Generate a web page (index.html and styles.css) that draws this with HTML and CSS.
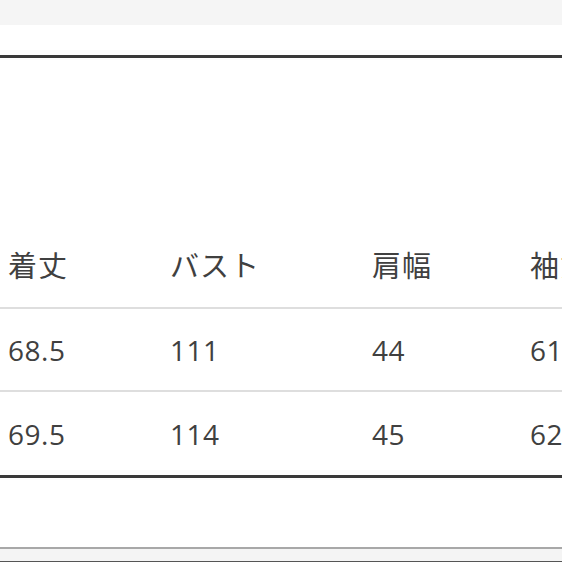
FILE: index.html
```html
<!DOCTYPE html>
<html lang="ja">
<head>
<meta charset="utf-8">
<link rel="stylesheet" href="styles.css">
</head>
<body>
<div class="page">
  <div class="topband"></div>
  <div class="gap"></div>
  <div class="sizetable">
    <div class="row head">
      <div class="cell">着丈</div>
      <div class="cell">バスト</div>
      <div class="cell">肩幅</div>
      <div class="cell">袖丈</div>
    </div>
    <div class="row data">
      <div class="cell">68.5</div>
      <div class="cell">111</div>
      <div class="cell">44</div>
      <div class="cell">61.5</div>
    </div>
    <div class="row data last">
      <div class="cell">69.5</div>
      <div class="cell">114</div>
      <div class="cell">45</div>
      <div class="cell">62.5</div>
    </div>
  </div>
  <div class="after"></div>
  <div class="footband"></div>
</div>
</body>
</html>
```
FILE: styles.css
```css
html, body {
  margin: 0;
  padding: 0;
  background: #ffffff;
}
.page {
  width: 562px;
  height: 562px;
  overflow: hidden;
  display: flex;
  flex-direction: column;
  font-family: "Open Sans", "Noto Sans CJK JP", sans-serif;
  color: #404040;
}
.topband {
  height: 25px;
  background: #f5f5f5;
  flex: none;
}
.gap {
  height: 30px;
  flex: none;
}
.sizetable {
  border-top: 3px solid #3a3a3a;
  border-bottom: 3px solid #3a3a3a;
  flex: none;
}
.row {
  display: grid;
  grid-template-columns: 162px 202px 158px 200px;
  padding-left: 8px;
  white-space: nowrap;
}
.head {
  height: 251px;
  align-items: end;
  border-bottom: 2px solid #dedede;
  font-family: "Noto Sans CJK JP", sans-serif;
  font-size: 29px;
  line-height: 40px;
  padding-bottom: 23px;
  box-sizing: border-box;
}
.head .cell {
  letter-spacing: 1px;
}
.data {
  height: 83px;
  align-items: center;
  font-size: 28px;
  letter-spacing: 0.5px;
  border-bottom: 2px solid #dedede;
  box-sizing: border-box;
}
.data.last {
  border-bottom: none;
}
.after {
  height: 69px;
  flex: none;
  border-bottom: 2px solid #a8a8a8;
}
.footband {
  height: 12px;
  flex: none;
  background: #f4f4f4;
  border-bottom: 2px solid #555555;
}
```
